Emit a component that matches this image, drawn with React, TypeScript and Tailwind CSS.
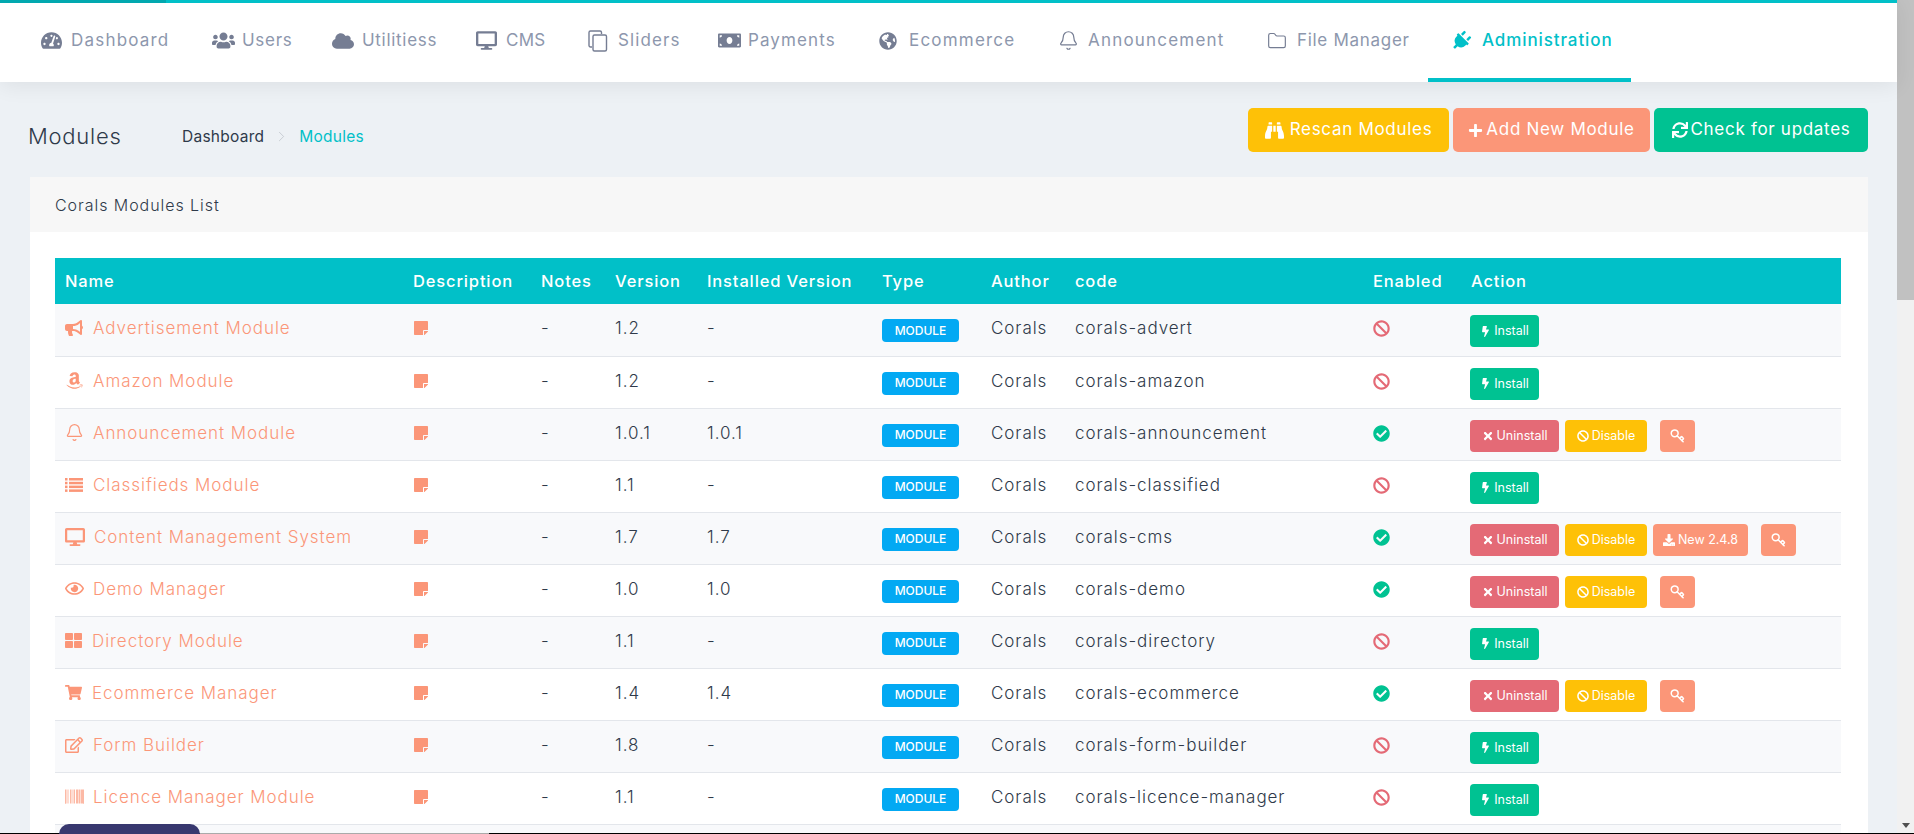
import type { ReactNode } from "react";
import { Bell, ChevronRight, Folder, Key } from "lucide-react";
import {
  FaAmazon,
  FaBan,
  FaBarcode,
  FaBinoculars,
  FaBolt,
  FaBullhorn,
  FaCheckCircle,
  FaCloud,
  FaDesktop,
  FaDownload,
  FaGlobeAmericas,
  FaMoneyBill,
  FaPlug,
  FaPlus,
  FaRegEdit,
  FaRegEye,
  FaShoppingCart,
  FaStickyNote,
  FaSync,
  FaTachometerAlt,
  FaThLarge,
  FaTimes,
  FaUsers,
} from "react-icons/fa";

const SlidersIcon = () => (
  <svg width="20" height="22" viewBox="0 0 20 22" fill="none" stroke="currentColor" strokeWidth="1.4">
    <path d="M4 17H2.5A1.5 1.5 0 0 1 1 15.5V2.5A1.5 1.5 0 0 1 2.5 1H12a1.5 1.5 0 0 1 1.5 1.5V4" />
    <rect x="5" y="5" width="13.5" height="16" rx="1.5" />
  </svg>
);

const ListIcon = () => (
  <svg width="18" height="14" viewBox="0 0 18 14" fill="currentColor">
    <rect y="0" width="2.5" height="2.5" />
    <rect x="4" y="0" width="14" height="2.5" />
    <rect y="3.8" width="2.5" height="2.5" />
    <rect x="4" y="3.8" width="14" height="2.5" />
    <rect y="7.6" width="2.5" height="2.5" />
    <rect x="4" y="7.6" width="14" height="2.5" />
    <rect y="11.4" width="2.5" height="2.5" />
    <rect x="4" y="11.4" width="14" height="2.5" />
  </svg>
);

const navItems = [
  { label: "Dashboard", width: "w-[171px]", tracking: "tracking-[1.2px]", icon: <FaTachometerAlt size={21} /> },
  { label: "Users", width: "w-[120px]", tracking: "tracking-[0.7px]", icon: <FaUsers size={23} /> },
  { label: "Utilitiess", width: "w-[144px]", tracking: "tracking-[0.7px]", icon: <FaCloud size={22} /> },
  { label: "CMS", width: "w-[112px]", tracking: "tracking-[0.3px]", icon: <FaDesktop size={21} /> },
  { label: "Sliders", width: "w-[130px]", tracking: "tracking-[1.1px]", icon: <SlidersIcon /> },
  { label: "Payments", width: "w-[161px]", tracking: "tracking-[1.1px]", icon: <FaMoneyBill size={23} /> },
  { label: "Ecommerce", width: "w-[179px]", tracking: "tracking-[1.2px]", icon: <FaGlobeAmericas size={18} /> },
  { label: "Announcement", width: "w-[209px]", tracking: "tracking-[1.2px]", icon: <Bell size={21} strokeWidth={1.4} /> },
  { label: "File Manager", width: "w-[184px]", tracking: "tracking-[0.7px]", icon: <Folder size={20} strokeWidth={1.4} /> },
];

type Row = {
  name: string;
  icon: ReactNode;
  iconBox: string;
  version: string;
  installed: string;
  code: string;
  enabled: boolean;
  update?: string;
};

const rows: Row[] = [
  { name: "Advertisement Module", icon: <FaBullhorn size={18} />, iconBox: "w-[28px]", version: "1.2", installed: "-", code: "corals-advert", enabled: false },
  { name: "Amazon Module", icon: <FaAmazon size={19} />, iconBox: "w-[28px]", version: "1.2", installed: "-", code: "corals-amazon", enabled: false },
  { name: "Announcement Module", icon: <Bell size={19} strokeWidth={1.5} />, iconBox: "w-[28px]", version: "1.0.1", installed: "1.0.1", code: "corals-announcement", enabled: true },
  { name: "Classifieds Module", icon: <ListIcon />, iconBox: "w-[28px]", version: "1.1", installed: "-", code: "corals-classified", enabled: false },
  { name: "Content Management System", icon: <FaDesktop size={20} />, iconBox: "w-[29px]", version: "1.7", installed: "1.7", code: "corals-cms", enabled: true, update: "New 2.4.8" },
  { name: "Demo Manager", icon: <FaRegEye size={19} />, iconBox: "w-[28px]", version: "1.0", installed: "1.0", code: "corals-demo", enabled: true },
  { name: "Directory Module", icon: <FaThLarge size={17} />, iconBox: "w-[27px]", version: "1.1", installed: "-", code: "corals-directory", enabled: false },
  { name: "Ecommerce Manager", icon: <FaShoppingCart size={17} />, iconBox: "w-[27px]", version: "1.4", installed: "1.4", code: "corals-ecommerce", enabled: true },
  { name: "Form Builder", icon: <FaRegEdit size={18} />, iconBox: "w-[28px]", version: "1.8", installed: "-", code: "corals-form-builder", enabled: false },
  { name: "Licence Manager Module", icon: <FaBarcode size={19} />, iconBox: "w-[28px]", version: "1.1", installed: "-", code: "corals-licence-manager", enabled: false },
];

const headers = ["Name", "Description", "Notes", "Version", "Installed Version", "Type", "Author", "code", "Enabled", "Action"];

const ActionButton = ({ color, width, icon, label }: { color: string; width: string; icon: ReactNode; label?: string }) => (
  <span className={`inline-flex h-[32px] items-center justify-center gap-[3px] rounded-[4px] text-[12.5px] font-normal tracking-normal text-white ${color} ${width}`}>
    {icon}
    {label}
  </span>
);

const KeyButton = () => (
  <ActionButton color="bg-[#fb9678]" width="ml-[7px] w-[35px]" icon={<Key size={15} strokeWidth={2.4} className="-scale-y-100" />} />
);

const Actions = ({ row }: { row: Row }) => {
  if (!row.enabled) {
    return <ActionButton color="bg-[#00c292]" width="w-[69px]" icon={<FaBolt size={11} />} label="Install" />;
  }
  return (
    <div className="flex gap-[6px]">
      <ActionButton color="bg-[#e46a76]" width="w-[89px]" icon={<FaTimes size={12} />} label="Uninstall" />
      <ActionButton color="bg-[#fec107]" width="w-[82px]" icon={<FaBan size={12} />} label="Disable" />
      {row.update && <ActionButton color="bg-[#fb9678]" width="w-[95px]" icon={<FaDownload size={12} />} label={row.update} />}
      <KeyButton />
    </div>
  );
};

export default function App() {
  return (
    <div className="relative flex h-[834px] w-[1914px] overflow-hidden bg-[#edf1f5] [font-family:Inter,'Noto_Sans',sans-serif] text-[#2f3a4a]">
      <div className="flex w-[1897px] flex-col">
        <header className="relative z-10 h-[82px] shrink-0 bg-white shadow-[0_4px_20px_rgba(0,0,0,0.07)]">
          <div className="flex h-[3px]">
            <div className="w-[166px] bg-[#01a8af]" />
            <div className="flex-1 bg-[#01c0c8]" />
          </div>
          <nav className="flex h-[79px] pl-[18px]">
            {navItems.map((item) => (
              <div key={item.label} className={`flex items-center pb-[4px] pl-[23px] text-[#8d97ad] ${item.width}`}>
                <span className="flex w-[30px] shrink-0 items-center text-[#757d93]">{item.icon}</span>
                <span className={`whitespace-nowrap text-[17px] ${item.tracking}`}>{item.label}</span>
              </div>
            ))}
            <div className="flex w-[203px] items-center border-b-[4px] border-[#01c0c8] pl-[23px] text-[#01c0c8]">
              <span className="flex w-[31px] shrink-0 items-center">
                <FaPlug size={20} className="rotate-45" />
              </span>
              <span className="whitespace-nowrap text-[17px] font-medium tracking-[0.9px]">Administration</span>
            </div>
          </nav>
        </header>

        <main className="flex min-h-0 flex-1 flex-col pl-[30px] pr-[29px]">
          <div className="flex h-[95px] shrink-0 items-start pt-[26px]">
            <div className="mt-[6px] flex h-[45px] items-center">
              <h1 className="-ml-[2px] w-[154px] text-[22px] font-light tracking-[0.75px]">Modules</h1>
              <div className="flex items-center text-[15.5px] tracking-[0.25px]">
                <span>Dashboard</span>
                <ChevronRight size={17} strokeWidth={1} className="mx-[9px] text-[#b9bfc7]" />
                <span className="text-[#01c0c8]">Modules</span>
              </div>
            </div>
            <div className="ml-auto flex gap-[4px] text-[17px] tracking-[0.7px] text-white">
              <span className="flex h-[44px] w-[201px] items-center justify-center gap-[6px] rounded-[5px] bg-[#fec107]">
                <FaBinoculars size={19} />
                Rescan Modules
              </span>
              <span className="flex h-[44px] w-[197px] items-center justify-center gap-[3px] rounded-[5px] bg-[#fb9678]">
                <FaPlus size={15} />
                Add New Module
              </span>
              <span className="flex h-[44px] w-[214px] items-center justify-center gap-[3px] rounded-[5px] bg-[#00c292]">
                <FaSync size={16} />
                Check for updates
              </span>
            </div>
          </div>

          <section className="flex-1 bg-white">
            <div className="flex h-[55px] items-center bg-[#f7f7f7] pl-[25px] pt-[1px] text-[16px] font-light tracking-[0.95px]">Corals Modules List</div>
            <div className="pl-[25px] pr-[27px] pt-[26px]">
              <table className="w-full table-fixed border-collapse text-left text-[17px] font-light leading-6 tracking-[0.95px]">
                <colgroup>
                  <col className="w-[348px]" />
                  <col className="w-[128px]" />
                  <col className="w-[74px]" />
                  <col className="w-[92px]" />
                  <col className="w-[175px]" />
                  <col className="w-[109px]" />
                  <col className="w-[84px]" />
                  <col className="w-[298px]" />
                  <col className="w-[98px]" />
                  <col />
                </colgroup>
                <thead>
                  <tr className="h-[46px] bg-[#01c0c8] text-white">
                    {headers.map((h) => (
                      <th key={h} className="whitespace-nowrap px-[10px] pb-[1px] text-[16.5px] font-medium tracking-[0.85px]">
                        {h}
                      </th>
                    ))}
                  </tr>
                </thead>
                <tbody>
                  {rows.map((row, i) => (
                    <tr key={row.code} className={`h-[52px] border-b border-[#e3e6eb] ${i % 2 === 0 ? "bg-[#f8f9fb]" : "bg-white"}`}>
                      <td className="px-[10px] pt-[12px] align-top text-[#fb9678]">
                        <span className="flex items-center whitespace-nowrap">
                          <span className={`flex shrink-0 items-center ${row.iconBox}`}>{row.icon}</span>
                          {row.name}
                        </span>
                      </td>
                      <td className="px-[10px] pt-[16px] align-top text-[#fb9678]">
                        <FaStickyNote size={16} />
                      </td>
                      <td className="px-[10px] pt-[12px] align-top">-</td>
                      <td className="px-[10px] pt-[12px] align-top">{row.version}</td>
                      <td className="px-[10px] pt-[12px] align-top">{row.installed}</td>
                      <td className="px-[10px] pt-[15px] align-top">
                        <span className="flex h-[23px] w-[77px] items-center justify-center rounded-[4px] bg-[#03a9f3] text-[12px] font-medium tracking-normal text-white">
                          MODULE
                        </span>
                      </td>
                      <td className="px-[10px] pt-[12px] align-top">Corals</td>
                      <td className="whitespace-nowrap px-[10px] pt-[12px] align-top">{row.code}</td>
                      <td className="px-[10px] pt-[16px] align-top">
                        {row.enabled ? (
                          <FaCheckCircle size={17} className="text-[#00c292]" />
                        ) : (
                          <FaBan size={17} className="text-[#e46a76]" />
                        )}
                      </td>
                      <td className="px-[9px] pt-[11px] align-top">
                        <Actions row={row} />
                      </td>
                    </tr>
                  ))}
                  <tr className="h-[52px] bg-[#f8f9fb]">
                    <td colSpan={10} />
                  </tr>
                </tbody>
              </table>
            </div>
          </section>
        </main>
      </div>

      <aside className="flex w-[17px] shrink-0 flex-col justify-between bg-[#f1f1f1]">
        <div className="h-[300px] bg-[#c1c1c1]" />
        <div className="flex h-[17px] items-center justify-center">
          <span className="h-0 w-0 border-x-[4px] border-t-[5px] border-x-transparent border-t-[#505050]" />
        </div>
      </aside>

      <div className="absolute bottom-0 left-0 right-0 flex h-px bg-black">
        <div className="ml-[200px] w-[289px] bg-[#aaaaaa]" />
      </div>
      <div className="absolute bottom-0 left-[59px] h-[10px] w-[141px] rounded-t-[12px] bg-[#38386f]" />
    </div>
  );
}
